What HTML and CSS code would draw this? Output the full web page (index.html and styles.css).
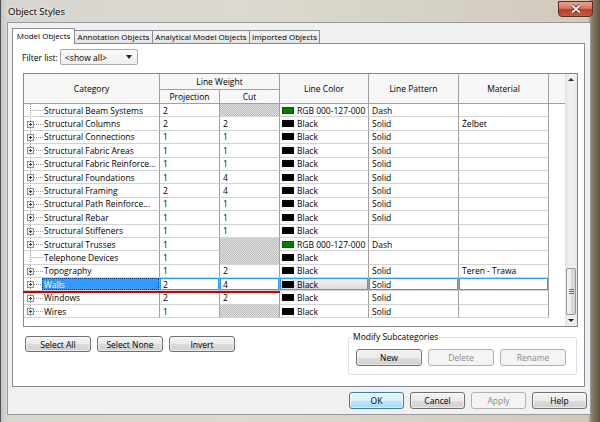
FILE: index.html
```html
<!DOCTYPE html>
<html lang="en">
<head>
<meta charset="utf-8">
<title>Object Styles</title>
<link rel="stylesheet" href="styles.css">
</head>
<body>
<div class="window">
  <div class="titlebar">
    <span class="title">Object Styles</span>
    <span class="close">
      <svg width="12" height="10" viewBox="0 0 12 10">
        <path class="x-shadow" d="M2 1.5L10 8.5M10 1.5L2 8.5"/>
        <path class="x-glyph" d="M2 1.5L10 8.5M10 1.5L2 8.5"/>
      </svg>
    </span>
  </div>
  <div class="client">
    <div class="tabs">
      <div class="tab active t-model">Model Objects</div>
      <div class="tab t-annot">Annotation Objects</div>
      <div class="tab t-anal">Analytical Model Objects</div>
      <div class="tab t-imp">Imported Objects</div>
    </div>
    <div class="panel">
      <div class="filter">
        <span class="filter-label">Filter list:</span>
        <div class="combo"><span>&lt;show all&gt;</span><i class="arr-down"></i></div>
      </div>
      <div class="grid">
        <div class="grid-main">
          <div class="head">
            <div class="h h-cat">Category</div>
            <div class="h h-lw">Line Weight</div>
            <div class="h h-col">Line Color</div>
            <div class="h h-pat">Line Pattern</div>
            <div class="h h-mat">Material</div>
            <div class="h h-fill"></div>
            <div class="h h-proj">Projection</div>
            <div class="h h-cut">Cut</div>
          </div>
          <div class="rows">
            <div class="row"><div class="c cat"><svg class="tree" viewBox="0 0 20 12"><path class="dots" d="M6.5 0V12M6.5 6.5H20"/></svg><span>Structural Beam Systems</span></div><div class="c">2</div><div class="c hatch"></div><div class="c clr"><i class="sw green"></i>RGB 000-127-000</div><div class="c">Dash</div><div class="c"></div></div>
            <div class="row"><div class="c cat"><svg class="tree" viewBox="0 0 20 12"><path class="dots" d="M6.5 0V12M10 6.5H20"/><rect class="pbox" x="3.5" y="3.5" width="6" height="6"/><path class="plus" d="M5 6.5h3M6.5 5v3"/></svg><span>Structural Columns</span></div><div class="c">2</div><div class="c">2</div><div class="c clr"><i class="sw"></i>Black</div><div class="c">Solid</div><div class="c">Żelbet</div></div>
            <div class="row"><div class="c cat"><svg class="tree" viewBox="0 0 20 12"><path class="dots" d="M6.5 0V12M10 6.5H20"/><rect class="pbox" x="3.5" y="3.5" width="6" height="6"/><path class="plus" d="M5 6.5h3M6.5 5v3"/></svg><span>Structural Connections</span></div><div class="c">1</div><div class="c">1</div><div class="c clr"><i class="sw"></i>Black</div><div class="c">Solid</div><div class="c"></div></div>
            <div class="row"><div class="c cat"><svg class="tree" viewBox="0 0 20 12"><path class="dots" d="M6.5 0V12M10 6.5H20"/><rect class="pbox" x="3.5" y="3.5" width="6" height="6"/><path class="plus" d="M5 6.5h3M6.5 5v3"/></svg><span>Structural Fabric Areas</span></div><div class="c">1</div><div class="c">1</div><div class="c clr"><i class="sw"></i>Black</div><div class="c">Solid</div><div class="c"></div></div>
            <div class="row"><div class="c cat"><svg class="tree" viewBox="0 0 20 12"><path class="dots" d="M6.5 0V12M10 6.5H20"/><rect class="pbox" x="3.5" y="3.5" width="6" height="6"/><path class="plus" d="M5 6.5h3M6.5 5v3"/></svg><span>Structural Fabric Reinforce...</span></div><div class="c">1</div><div class="c">1</div><div class="c clr"><i class="sw"></i>Black</div><div class="c">Solid</div><div class="c"></div></div>
            <div class="row"><div class="c cat"><svg class="tree" viewBox="0 0 20 12"><path class="dots" d="M6.5 0V12M10 6.5H20"/><rect class="pbox" x="3.5" y="3.5" width="6" height="6"/><path class="plus" d="M5 6.5h3M6.5 5v3"/></svg><span>Structural Foundations</span></div><div class="c">1</div><div class="c">4</div><div class="c clr"><i class="sw"></i>Black</div><div class="c">Solid</div><div class="c"></div></div>
            <div class="row"><div class="c cat"><svg class="tree" viewBox="0 0 20 12"><path class="dots" d="M6.5 0V12M10 6.5H20"/><rect class="pbox" x="3.5" y="3.5" width="6" height="6"/><path class="plus" d="M5 6.5h3M6.5 5v3"/></svg><span>Structural Framing</span></div><div class="c">2</div><div class="c">4</div><div class="c clr"><i class="sw"></i>Black</div><div class="c">Solid</div><div class="c"></div></div>
            <div class="row"><div class="c cat"><svg class="tree" viewBox="0 0 20 12"><path class="dots" d="M6.5 0V12M10 6.5H20"/><rect class="pbox" x="3.5" y="3.5" width="6" height="6"/><path class="plus" d="M5 6.5h3M6.5 5v3"/></svg><span>Structural Path Reinforce...</span></div><div class="c">1</div><div class="c">1</div><div class="c clr"><i class="sw"></i>Black</div><div class="c">Solid</div><div class="c"></div></div>
            <div class="row"><div class="c cat"><svg class="tree" viewBox="0 0 20 12"><path class="dots" d="M6.5 0V12M10 6.5H20"/><rect class="pbox" x="3.5" y="3.5" width="6" height="6"/><path class="plus" d="M5 6.5h3M6.5 5v3"/></svg><span>Structural Rebar</span></div><div class="c">1</div><div class="c">1</div><div class="c clr"><i class="sw"></i>Black</div><div class="c">Solid</div><div class="c"></div></div>
            <div class="row"><div class="c cat"><svg class="tree" viewBox="0 0 20 12"><path class="dots" d="M6.5 0V12M10 6.5H20"/><rect class="pbox" x="3.5" y="3.5" width="6" height="6"/><path class="plus" d="M5 6.5h3M6.5 5v3"/></svg><span>Structural Stiffeners</span></div><div class="c">1</div><div class="c">1</div><div class="c clr"><i class="sw"></i>Black</div><div class="c"></div><div class="c"></div></div>
            <div class="row"><div class="c cat"><svg class="tree" viewBox="0 0 20 12"><path class="dots" d="M6.5 0V12M10 6.5H20"/><rect class="pbox" x="3.5" y="3.5" width="6" height="6"/><path class="plus" d="M5 6.5h3M6.5 5v3"/></svg><span>Structural Trusses</span></div><div class="c">1</div><div class="c hatch"></div><div class="c clr"><i class="sw green"></i>RGB 000-127-000</div><div class="c">Dash</div><div class="c"></div></div>
            <div class="row"><div class="c cat"><svg class="tree" viewBox="0 0 20 12"><path class="dots" d="M6.5 0V12M6.5 6.5H20"/></svg><span>Telephone Devices</span></div><div class="c">1</div><div class="c hatch"></div><div class="c clr"><i class="sw"></i>Black</div><div class="c"></div><div class="c"></div></div>
            <div class="row"><div class="c cat"><svg class="tree" viewBox="0 0 20 12"><path class="dots" d="M6.5 0V12M10 6.5H20"/><rect class="pbox" x="3.5" y="3.5" width="6" height="6"/><path class="plus" d="M5 6.5h3M6.5 5v3"/></svg><span>Topography</span></div><div class="c">1</div><div class="c">2</div><div class="c clr"><i class="sw"></i>Black</div><div class="c">Solid</div><div class="c">Teren - Trawa</div></div>
            <div class="row sel"><div class="c cat"><svg class="tree" viewBox="0 0 20 12"><path class="dots" d="M6.5 0V12M10 6.5H20"/><rect class="pbox" x="3.5" y="3.5" width="6" height="6"/><path class="plus" d="M5 6.5h3M6.5 5v3"/></svg><span class="sel-label">Walls</span></div><div class="c edit">2</div><div class="c edit">4</div><div class="c clr edit-btn"><i class="sw"></i>Black</div><div class="c edit">Solid</div><div class="c edit"></div></div>
            <div class="row"><div class="c cat"><svg class="tree" viewBox="0 0 20 12"><path class="dots" d="M6.5 0V12M10 6.5H20"/><rect class="pbox" x="3.5" y="3.5" width="6" height="6"/><path class="plus" d="M5 6.5h3M6.5 5v3"/></svg><span>Windows</span></div><div class="c">2</div><div class="c">2</div><div class="c clr"><i class="sw"></i>Black</div><div class="c">Solid</div><div class="c"></div></div>
            <div class="row"><div class="c cat"><svg class="tree" viewBox="0 0 20 12"><path class="dots" d="M6.5 0V12M10 6.5H20"/><rect class="pbox" x="3.5" y="3.5" width="6" height="6"/><path class="plus" d="M5 6.5h3M6.5 5v3"/></svg><span>Wires</span></div><div class="c">1</div><div class="c hatch"></div><div class="c clr"><i class="sw"></i>Black</div><div class="c">Solid</div><div class="c"></div></div>
          </div>
        </div>
        <div class="vscroll">
          <div class="sb-btn"><i class="arr-up"></i></div>
          <div class="sb-space"></div>
          <div class="thumb"><i></i><i></i><i></i></div>
          <div class="sb-btn"><i class="arr-down small"></i></div>
        </div>
      </div>
      <div class="bottom">
        <div class="sel-buttons">
          <div class="btn">Select All</div>
          <div class="btn">Select None</div>
          <div class="btn">Invert</div>
        </div>
        <fieldset class="group">
          <legend>Modify Subcategories</legend>
          <div class="group-buttons">
            <div class="btn">New</div>
            <div class="btn disabled">Delete</div>
            <div class="btn disabled">Rename</div>
          </div>
        </fieldset>
      </div>
    </div>
    <div class="dlg-buttons">
      <div class="btn default">OK</div>
      <div class="btn">Cancel</div>
      <div class="btn disabled">Apply</div>
      <div class="btn">Help</div>
    </div>
  </div>
</div>
</body>
</html>
```

FILE: styles.css
```css
* { box-sizing: border-box; }
html, body { margin: 0; padding: 0; }
body {
  width: 600px;
  height: 422px;
  overflow: hidden;
  font-family: "Open Sans", "Noto Sans", sans-serif;
  font-size: 8.5px;
  color: #000;
  background: #c9c5ba;
}
.window {
  width: 600px;
  height: 422px;
  display: flex;
  flex-direction: column;
  background:
    linear-gradient(90deg, #4f5058 0, #4f5058 1px, #c4c4c2 1px, #d6d5cf 6px, #dcd9d0 40%, #d6d2c6 70%, #d0cabb 98%, #8d7f68 98.6%, #5e5443 100%);
}
.titlebar {
  height: 22px;
  flex: none;
  display: flex;
  justify-content: space-between;
  align-items: flex-start;
  padding: 0 7px 0 8px;
}
.title {
  margin-top: 6px;
  font-size: 9.5px;
  line-height: 12px;
  text-shadow: 0 0 5px #f4f2ea, 0 0 3px #f4f2ea;
}
.close {
  margin-top: 1px;
  width: 35px;
  height: 16px;
  border: 1px solid #5e2a22;
  border-radius: 0 0 4px 4px;
  background: linear-gradient(#e6a597, #d37666 45%, #bd3c28 55%, #c65a45);
  display: flex;
  align-items: center;
  justify-content: center;
}
.x-shadow { stroke: #4a1a12; stroke-width: 3.2; fill: none; }
.x-glyph { stroke: #fff; stroke-width: 1.8; fill: none; }
.client {
  margin-left: 7px;
  width: 584px;
  height: 393px;
  flex: none;
  background: #f0f0f0;
  border: 1px solid #9a9a9a;
  padding: 5px 0 0 4px;
  display: flex;
  flex-direction: column;
}
.tabs {
  display: flex;
  align-items: flex-end;
  height: 15px;
  flex: none;
}
.tab {
  flex: none;
  height: 13px;
  margin-left: -1px;
  border: 1px solid #898c95;
  border-bottom: none;
  background: linear-gradient(#f4f4f4, #e4e4e4);
  font-size: 8px;
  line-height: 11px;
  text-align: center;
  white-space: nowrap;
}
.tab.active {
  height: 16px;
  margin-left: 0;
  margin-bottom: -1px;
  background: #fff;
  position: relative;
  z-index: 1;
  line-height: 13px;
}
.t-model { width: 63px; }
.t-annot { width: 79px; }
.t-anal { width: 98px; }
.t-imp { width: 71px; }
.panel {
  width: 573px;
  height: 344px;
  flex: none;
  background: #fff;
  border: 1px solid #898c95;
  padding: 5px 0 0 9px;
  display: flex;
  flex-direction: column;
}
.filter {
  display: flex;
  align-items: center;
  height: 16px;
}
.filter-label { width: 38px; }
.combo {
  width: 78px;
  height: 16px;
  border: 1px solid #a9a9a9;
  border-radius: 2px;
  background: linear-gradient(#fbfbfb, #eeeeee);
  display: flex;
  align-items: center;
  justify-content: space-between;
  padding: 0 5px 0 4px;
}
.arr-down {
  width: 0; height: 0;
  border-left: 3px solid transparent;
  border-right: 3px solid transparent;
  border-top: 4px solid #222;
}
.arr-down.small { border-top-width: 3px; }
.arr-up {
  width: 0; height: 0;
  border-left: 3px solid transparent;
  border-right: 3px solid transparent;
  border-bottom: 3px solid #333;
}
.grid {
  margin-top: 8px;
  margin-left: 1px;
  width: 555px;
  height: 254px;
  flex: none;
  border: 1px solid #828790;
  display: flex;
}
.grid-main {
  width: 541px;
  flex: none;
  background: #fff;
  display: flex;
  flex-direction: column;
}
.head {
  display: grid;
  grid-template-columns: 136px 60px 60px 89px 90px 90px 16px;
  grid-template-rows: 16px 14px;
  background: #f7f7f7;
}
.h {
  border-right: 1px solid #a0a0a0;
  border-bottom: 1px solid #a0a0a0;
  display: flex;
  align-items: center;
  justify-content: center;
  white-space: nowrap;
}
.h-cat { grid-column: 1; grid-row: 1 / 3; }
.h-lw { grid-column: 2 / 4; grid-row: 1; }
.h-col { grid-column: 4; grid-row: 1 / 3; }
.h-pat { grid-column: 5; grid-row: 1 / 3; }
.h-mat { grid-column: 6; grid-row: 1 / 3; }
.h-fill { grid-column: 7; grid-row: 1 / 3; border-right: none; }
.h-proj { grid-column: 2; grid-row: 2; }
.h-cut { grid-column: 3; grid-row: 2; }
.row {
  display: grid;
  grid-template-columns: 136px 60px 60px 89px 90px 90px;
  height: 13.4px;
}
.c {
  border-right: 1px solid #a0a0a0;
  border-bottom: 1px solid #d3d3d3;
  display: flex;
  align-items: center;
  padding-left: 3px;
  white-space: nowrap;
  overflow: hidden;
}
.c.cat { padding-left: 0; }
.tree { width: 20px; height: 12px; flex: none; }
.dots { stroke: #9a9a9a; stroke-width: 1; stroke-dasharray: 1 1; fill: none; }
.pbox { fill: #f4f4f4; stroke: #8e8f8f; stroke-width: 1; }
.plus { stroke: #3a3a3a; stroke-width: 1; fill: none; }
.hatch {
  background: repeating-conic-gradient(#b9b9b9 0 25%, #e4e4e4 0 50%) 0 0 / 2px 2px;
}
.c.clr { padding-left: 2px; }
.sw {
  width: 12px;
  height: 7px;
  margin-right: 3px;
  background: #000;
  border: 1px solid #000;
  flex: none;
}
.sw.green { background: #008000; border-color: #0f4f0f; }
.row.sel { position: relative; }
.row.sel::after {
  content: "";
  position: absolute;
  left: -1px;
  bottom: -2px;
  width: 257px;
  height: 2px;
  background: #d10000;
}
.sel-label {
  flex: 1;
  align-self: stretch;
  margin-left: -2px;
  padding-left: 2px;
  background: #3399ff;
  color: #fff;
  display: flex;
  align-items: center;
  outline: 1px dotted #0b3c7a;
  outline-offset: -1px;
}
.c.edit { box-shadow: inset 0 0 0 1px #3399ff; }
.c.edit-btn {
  box-shadow: inset 1px 1px 0 #3399ff, inset -1px -1px 0 #8a8a8a;
  background: linear-gradient(#f6f6f6, #e6e6e6 50%, #d9d9d9);
}
.vscroll {
  width: 12px;
  flex: none;
  display: flex;
  flex-direction: column;
  background: linear-gradient(90deg, #e2e2e2, #efefef 35%, #efefef 70%, #e6e6e6);
}
.sb-btn {
  height: 11px;
  flex: none;
  display: flex;
  align-items: center;
  justify-content: center;
}
.sb-space { flex: 1; }
.thumb {
  height: 47px;
  flex: none;
  margin: 0 1px;
  border: 1px solid #979797;
  border-radius: 2px;
  background: linear-gradient(90deg, #f4f4f4, #e9e9e9 50%, #dadada 50%, #d4d4d4);
  display: flex;
  flex-direction: column;
  align-items: center;
  justify-content: center;
  gap: 1px;
}
.thumb i {
  width: 5px;
  height: 1px;
  background: #6f6f6f;
}
.bottom {
  display: flex;
  justify-content: space-between;
  align-items: flex-start;
  margin: 0 7px 0 3px;
}
.sel-buttons {
  margin-top: 9px;
  display: flex;
  gap: 6px;
}
.btn {
  width: 66px;
  height: 16px;
  border: 1px solid #707070;
  border-radius: 3px;
  background: linear-gradient(#f2f2f2, #ebebeb 50%, #dddddd 50%, #cfcfcf);
  box-shadow: inset 0 0 0 1px rgba(255, 255, 255, 0.55);
  display: flex;
  align-items: center;
  justify-content: center;
  white-space: nowrap;
}
.btn.disabled {
  border-color: #adb2b5;
  background: #f4f4f4;
  color: #8a8a8a;
  box-shadow: none;
}
.btn.default {
  border-color: #3c7fb1;
  background: linear-gradient(#eaf6fd, #d9f0fc 50%, #bee6fd 50%, #a7d9f5);
  box-shadow: inset 0 0 0 1px rgba(255, 255, 255, 0.6);
}
.group {
  margin: 4px 0 0 0;
  width: 229px;
  padding: 6px 10px 8px 7px;
  border: 1px solid #d5dfe5;
  border-radius: 3px;
  min-width: 0;
}
.group legend {
  margin-left: -4px;
  padding: 0 1px;
  line-height: 12px;
}
.group-buttons {
  display: flex;
  gap: 6px;
}
.group-buttons .btn { height: 17px; }
.dlg-buttons {
  display: flex;
  justify-content: flex-end;
  gap: 6px;
  margin-top: 5px;
  padding-right: 3px;
}
.dlg-buttons .btn { width: 55px; height: 17px; }
```
